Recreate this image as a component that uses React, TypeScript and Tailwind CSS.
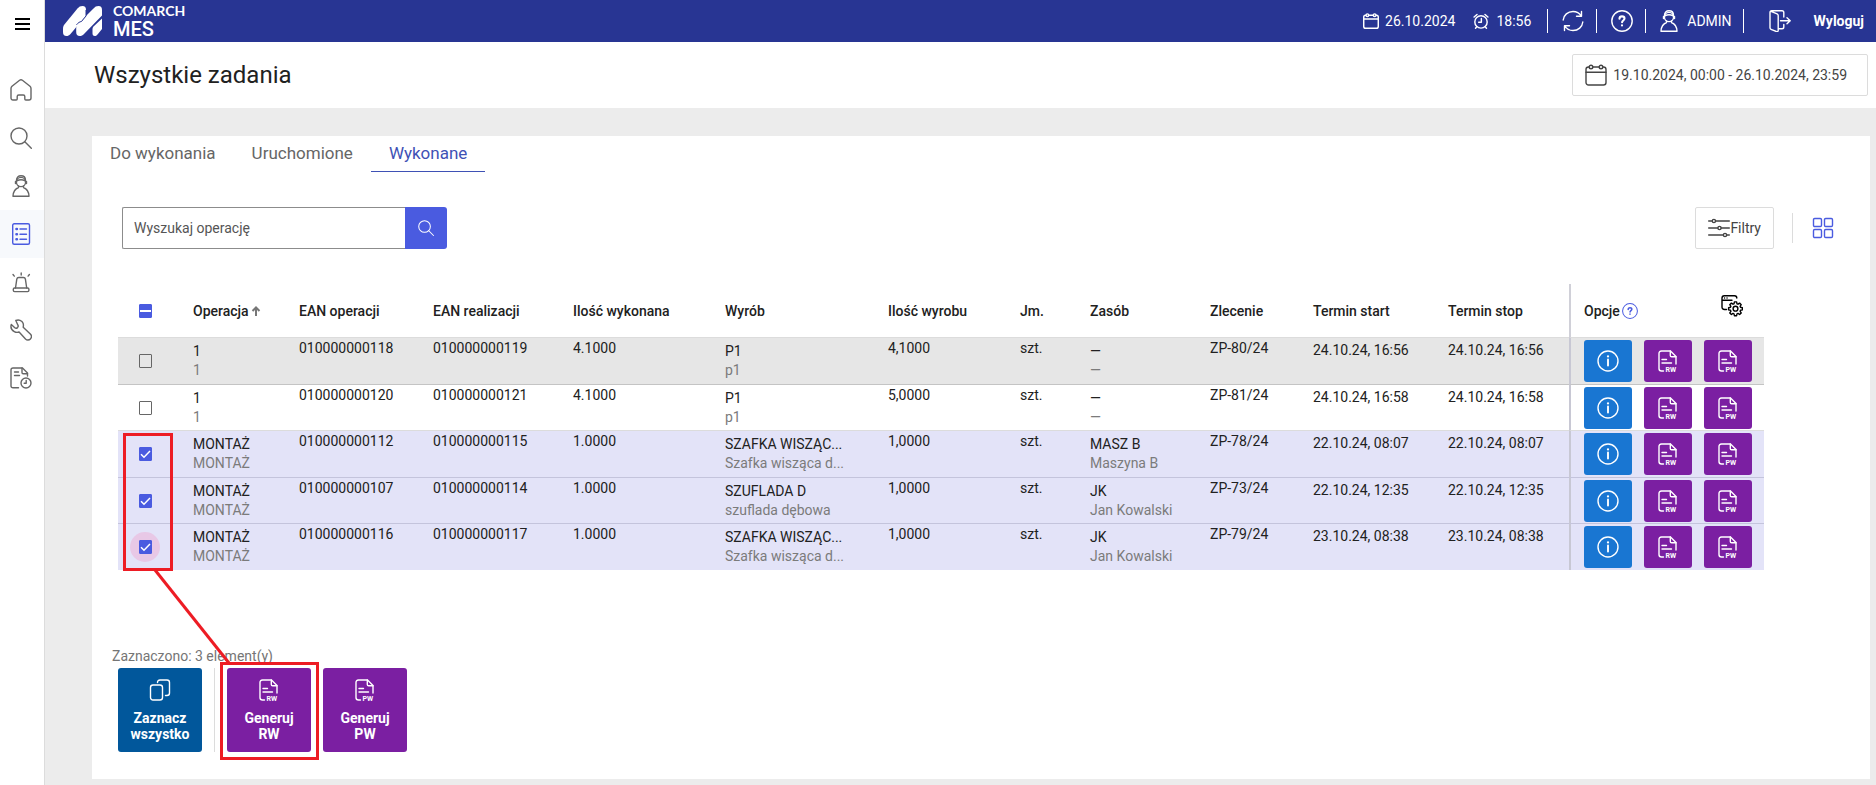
import type { ReactNode } from "react";

type IconProps = { className?: string };

function Svg({ className = "", children, box = "0 0 22 22" }: IconProps & { children: ReactNode; box?: string }) {
  return (
    <svg
      viewBox={box}
      fill="none"
      stroke="currentColor"
      strokeWidth="1.4"
      strokeLinecap="round"
      strokeLinejoin="round"
      aria-hidden="true"
      className={`shrink-0 ${className}`}
    >
      {children}
    </svg>
  );
}

const HomeIcon = ({ className }: IconProps) => (
  <Svg className={className}>
    <path d="M1 9.500c0-1 .3-1.500 1-2.200L9.600 1.300c.9-.7 1.900-.7 2.800 0L20 7.300c.7.7 1 1.200 1 2.200V19c0 1.200-.8 2-2 2h-3.200c-.7 0-1-.4-1-1v-2.500c0-1-.6-1.500-1.500-1.500h-4.600c-.9 0-1.500.5-1.500 1.500V20c0 .6-.3 1-1 1H3c-1.200 0-2-.8-2-2z" />
  </Svg>
);

const SearchIcon = ({ className }: IconProps) => (
  <Svg className={className}>
    <circle cx="9" cy="9" r="8" />
    <path d="M14.800 14.800 21.300 21.300" />
  </Svg>
);

const UserIcon = ({ className }: IconProps) => (
  <Svg className={className}>
    <circle cx="11" cy="7" r="4.600" />
    <path d="M6.500 5.500C6.500 2.500 8.300.8 11 .8s4.500 1.700 4.500 4.700M5.500 6.500v2M16.500 6.500v2M6.800 5.800c2.500-1.300 5.900-1.300 8.400 0M8.500 11v1.500C5.300 13.700 3.200 16.500 3 21.300h16c-.2-4.800-2.300-7.600-5.500-8.800V11" />
  </Svg>
);

const ListIcon = ({ className }: IconProps) => (
  <Svg className={className}>
    <rect x="2.700" y=".8" width="16.800" height="20.400" rx="1.500" />
    <path d="M10 6h6.500M10 11.200h6.500M10 16.300h6.500" />
    <path d="M6.500 6h.4M6.500 11.200h.4M6.500 16.300h.4" strokeWidth="2.600" />
  </Svg>
);

const AlarmIcon = ({ className }: IconProps) => (
  <Svg className={className}>
    <path d="M5.500 17 6.800 8.200C7 7 7.600 6.500 8.800 6.500h4.600c1.200 0 1.800.5 2 1.700L16.700 17" />
    <rect x="3.300" y="17" width="15.600" height="3.600" rx="1.300" />
    <path d="M11.200 2v2M3 3.500l1.300 1.600M19.400 3.500l-1.300 1.600" />
  </Svg>
);

const WrenchIcon = ({ className }: IconProps) => (
  <Svg className={className}>
    <path d="M5.800 1.500c2.800-1.200 6.200-.2 7.300 2.800.5 1.500.4 2.700.1 3.900l7.100 6.900c1.500 1.500 1.200 3.700.1 4.900-1.300 1.400-3.500 1.400-4.900 0l-6.400-7c-1.500.5-3.200.5-4.800-.4C1.500 11 .5 8 1.300 5.500l3.500 3.200c.8.7 1.900.6 2.700-.1.900-.9.900-2 .2-2.900z" />
  </Svg>
);

const ReportIcon = ({ className }: IconProps) => (
  <Svg className={className}>
    <path d="M8.500 20.800H3c-1.300 0-2-.7-2-2V3c0-1.300.7-2 2-2h9.500l5 5v3" />
    <path d="M12 1v4.500c0 .8.400 1.200 1.200 1.200h4.300M4.500 5h4M4.500 8.500h5" />
    <circle cx="16" cy="16" r="5" />
    <path d="M16.200 13.500v2.700h-2" />
  </Svg>
);

const CalendarIcon = ({ className }: IconProps) => (
  <Svg className={className}>
    <rect x="1" y="3" width="20" height="18" rx="2.500" />
    <path d="M1 8.300h20" />
    <circle cx="6" cy="3" r="1.800" fill="var(--hole)" />
    <circle cx="16" cy="3" r="1.800" fill="var(--hole)" />
  </Svg>
);

const ClockIcon = ({ className }: IconProps) => (
  <Svg className={className}>
    <circle cx="11" cy="12.300" r="8.500" />
    <path d="M11.500 7.500v5.300H7.800M1.500 5.500 5.500 2M20.500 5.500l-4-3.500M5 19l-1.500 2M17 19l1.500 2" />
  </Svg>
);

const RefreshIcon = ({ className }: IconProps) => (
  <Svg className={className}>
    <path d="M1.200 10C1.700 5 5.800 1.500 11 1.500c3.500 0 6.500 1.700 8.200 4.500M19.500 1.500V6.300h-5M20.800 12c-.5 5-4.600 8.500-9.800 8.500-3.500 0-6.500-1.700-8.200-4.500M2.500 20.500v-4.800h5" />
  </Svg>
);

const HelpIcon = ({ className }: IconProps) => (
  <Svg className={className}>
    <circle cx="11" cy="11" r="10.200" />
    <path d="M8.500 8.800c0-1.500 1-2.400 2.500-2.400s2.500.9 2.500 2.200c0 1.800-2.400 1.900-2.400 3.700M11 15.300v.2" strokeWidth="2.100" />
  </Svg>
);

const LogoutIcon = ({ className }: IconProps) => (
  <Svg className={className}>
    <path d="M1 2.500v15.300c0 .8.300 1.200 1 1.500l5.300 2.200c1.200.4 1.900 0 1.900-1.200V5.500c0-.8-.4-1.300-1.100-1.600L2 1.300M1 2.500c0-1 .6-1.700 1.600-1.700H13c1.200 0 1.800.7 1.800 1.800V7M9.200 18.800H13c1.200 0 1.800-.6 1.800-1.800v-2.500M11.500 10.800h9.500M18 7.800l3.200 3-3.200 3" />
  </Svg>
);

const FilterIcon = ({ className }: IconProps) => (
  <Svg className={className}>
    <path d="M.7 4h3.500M7.600 4h13.700M.7 11h9M13.300 11h8M.7 18h14.500M18.800 18h2.500" />
    <circle cx="5.900" cy="4" r="1.600" />
    <circle cx="11.500" cy="11" r="1.600" />
    <circle cx="17" cy="18" r="1.600" />
  </Svg>
);

const TilesIcon = ({ className }: IconProps) => (
  <Svg className={className}>
    <rect x="1.500" y="1.500" width="8" height="8" rx="1.200" />
    <rect x="12.500" y="1.500" width="8" height="8" rx="1.200" />
    <rect x="1.500" y="12.500" width="8" height="8" rx="1.200" />
    <rect x="12.500" y="12.500" width="8" height="8" rx="1.200" />
  </Svg>
);

const InfoIcon = ({ className }: IconProps) => (
  <Svg className={className}>
    <circle cx="11" cy="11" r="10" />
    <path d="M11 9.500v6" strokeWidth="1.900" />
    <path d="M11 6.300v.1" strokeWidth="2.200" />
  </Svg>
);

const CopyIcon = ({ className }: IconProps) => (
  <Svg className={className}>
    <rect x="1.500" y="6" width="12" height="15" rx="2.500" />
    <path d="M8.500 3.500c0-1.500.8-2.500 2.500-2.500h7c1.700 0 2.500 1 2.500 2.500V14c0 1.500-.8 2.500-2.500 2.500h-1.500" />
  </Svg>
);

const GearIcon = ({ className }: IconProps) => (
  <Svg className={className}>
    <path d="M5.500 14.500H3.500C1.800 14.500 1 13.500 1 12V3.200C1 1.700 1.900.8 3.300.8h10.200c1.400 0 2.300.9 2.300 2.200M1 5.200h10M3.500 3h.1M6 3h.1" />
    <circle cx="14.500" cy="13.700" r="2.400" />
    <path d="m13.400 6.900h2.200l.4 1.900 1 .4 1.600-1.100 1.600 1.600-1.100 1.600.4 1 1.900.4v2.200l-1.900.4-.4 1 1.100 1.600-1.600 1.600-1.600-1.100-1 .4-.4 1.900h-2.200l-.4-1.900-1-.4-1.600 1.100-1.600-1.600 1.100-1.600-.4-1-1.900-.4v-2.200l1.900-.4.4-1-1.100-1.600 1.600-1.600 1.600 1.100 1-.4z" />
  </Svg>
);

function DocIcon({ label, className }: IconProps & { label: string }) {
  return (
    <Svg className={className}>
      <path d="M6.500 21H4.500C2.800 21 2 20 2 18.500v-15C2 2 2.800 1 4.500 1h9L19 6.500V14" />
      <path d="M13.300 1v4.500c0 .9.400 1.300 1.300 1.300H19M5 9.500h4.500M5 13h9.500" />
      <text x="8.500" y="21.500" fontSize="7" fontWeight="700" fontFamily="Roboto, sans-serif" fill="currentColor" stroke="none">
        {label}
      </text>
    </Svg>
  );
}

function Logo() {
  return (
    <div className="flex items-center gap-[11px] text-white">
      <svg viewBox="0 0 39 30" className="h-[30px] w-[39px]" fill="currentColor" aria-hidden="true">
        <path d="M14.500 2.500C16 .8 17.300 0 19.500 0 22 0 23 1.500 23 4v5.500L7.500 28C6 29.600 5 30 3.500 30 1 30 0 28.500 0 26v-3.500c0-2 .5-3 1.800-4.600z" />
        <path d="M30.500 2.500C32 .8 33.300 0 35.500 0 38 0 39 1.500 39 4v5.500L21 28c-1.500 1.600-2.500 2-4.200 2-2.500 0-3.600-1.500-3.600-4v-3.500c0-1.500.3-3 1.500-4.300z" />
        <path d="M39 12.500V23l-4.500 5.500c-1 1.200-1.700 1.500-2.700 1.500-1.800 0-2.300-1.300-2.300-3v-4c0-1 .3-1.800 1-2.600z" />
        <path d="M23 4v6l-4.500 5.500c-2 .3-3.300 1.200-5 3.300" stroke="#283593" strokeWidth="1" fill="none" />
      </svg>
      <div>
        <div className="font-[Lato,sans-serif] text-sm leading-4 font-bold">COMARCH</div>
        <div className="text-xl leading-5 font-medium">MES</div>
      </div>
    </div>
  );
}

const navItems = [
  { label: "Start", icon: HomeIcon },
  { label: "Szukaj", icon: SearchIcon },
  { label: "Pracownicy", icon: UserIcon },
  { label: "Zadania", icon: ListIcon, active: true },
  { label: "Alarmy", icon: AlarmIcon },
  { label: "Narzędzia", icon: WrenchIcon },
  { label: "Raporty", icon: ReportIcon },
];

function Sidebar() {
  return (
    <aside className="flex w-[45px] shrink-0 flex-col border-r border-[#dcdcdc] bg-white text-[#666]">
      <button aria-label="Menu" className="mt-[18px] ml-[15px] flex h-3 w-[15px] flex-col justify-between">
        <span className="h-0.5 w-full bg-black" />
        <span className="h-0.5 w-full bg-black" />
        <span className="h-0.5 w-full bg-black" />
      </button>
      <nav className="mt-9">
        {navItems.map(({ label, icon: Icon, active }) => (
          <a
            key={label}
            href="#"
            aria-label={label}
            className={`flex h-12 items-center justify-center pr-0.5 ${active ? "bg-[#f7f9fc] text-[#4a5be0]" : ""}`}
          >
            <Icon className="size-[22px]" />
          </a>
        ))}
      </nav>
    </aside>
  );
}

function TopBar() {
  return (
    <header className="flex h-[42px] items-center justify-between bg-[#283593] pr-3 pl-[18px] text-sm text-white [--hole:#283593]">
      <Logo />
      <div className="flex items-center">
        <CalendarIcon className="size-4 stroke-2" />
        <span className="ml-1.5">26.10.2024</span>
        <ClockIcon className="ml-[18px] size-4 stroke-2" />
        <span className="ml-[7px]">18:56</span>
        <span className="ml-4 h-6 w-px bg-white" />
        <button aria-label="Odśwież" className="ml-3.5">
          <RefreshIcon className="size-[22px]" />
        </button>
        <span className="ml-3 h-6 w-px bg-white" />
        <button aria-label="Pomoc" className="ml-3.5">
          <HelpIcon className="size-[22px]" />
        </button>
        <span className="ml-3 h-6 w-px bg-white" />
        <UserIcon className="ml-3 size-[22px]" />
        <span className="ml-[7px]">ADMIN</span>
        <span className="ml-[11px] h-6 w-px bg-white" />
        <button className="ml-[25px] flex items-center font-bold">
          <LogoutIcon className="mr-[23px] size-[22px]" />
          Wyloguj
        </button>
      </div>
    </header>
  );
}

type Row = {
  op: string;
  ean: string;
  eanReal: string;
  done: string;
  product: [string, string];
  qty: string;
  resource: [string, string];
  order: string;
  date: string;
  checked?: boolean;
  focused?: boolean;
  tone: string;
};

const rows: Row[] = [
  { op: "1", ean: "010000000118", eanReal: "010000000119", done: "4.1000", product: ["P1", "p1"], qty: "4,1000", resource: ["—", "—"], order: "ZP-80/24", date: "24.10.24, 16:56", tone: "bg-[#e6e6e6] *:border-t-[#dcdcdc]" },
  { op: "1", ean: "010000000120", eanReal: "010000000121", done: "4.1000", product: ["P1", "p1"], qty: "5,0000", resource: ["—", "—"], order: "ZP-81/24", date: "24.10.24, 16:58", tone: "bg-white *:border-t-[#c4c4c4]" },
  { op: "MONTAŻ", ean: "010000000112", eanReal: "010000000115", done: "1.0000", product: ["SZAFKA WISZĄC...", "Szafka wisząca d..."], qty: "1,0000", resource: ["MASZ B", "Maszyna B"], order: "ZP-78/24", date: "22.10.24, 08:07", checked: true, tone: "bg-[#e3e3f8] *:border-t-[#dcdcdc]" },
  { op: "MONTAŻ", ean: "010000000107", eanReal: "010000000114", done: "1.0000", product: ["SZUFLADA D", "szuflada dębowa"], qty: "1,0000", resource: ["JK", "Jan Kowalski"], order: "ZP-73/24", date: "22.10.24, 12:35", checked: true, tone: "bg-[#e3e3f8] *:border-t-[#c4c4dc]" },
  { op: "MONTAŻ", ean: "010000000116", eanReal: "010000000117", done: "1.0000", product: ["SZAFKA WISZĄC...", "Szafka wisząca d..."], qty: "1,0000", resource: ["JK", "Jan Kowalski"], order: "ZP-79/24", date: "23.10.24, 08:38", checked: true, focused: true, tone: "bg-[#e3e3f8] *:border-t-[#c4c4dc]" },
];

function Checkbox({ label, checked, mixed, focused }: { label: string; checked?: boolean; mixed?: boolean; focused?: boolean }) {
  return (
    <span className="relative flex h-3.5 w-[13px]">
      {focused && <span className="absolute -top-2 -left-[9px] size-[30px] rounded-full bg-[#e8c8e6]" />}
      <input
        type="checkbox"
        aria-label={label}
        defaultChecked={checked || mixed}
        className="relative h-3.5 w-[13px] appearance-none rounded-[1px] border border-[#666] checked:border-[#4a5be0] checked:bg-[#4a5be0]"
      />
      {(checked || mixed) && (
        <svg viewBox="0 0 13 14" className="pointer-events-none absolute inset-0 h-3.5 w-[13px]" fill="none" stroke="white" aria-hidden="true">
          {mixed ? <path d="M1 7h11" strokeWidth="2" /> : <path d="m2 7.300 3 3L11 4" strokeWidth="1.500" />}
        </svg>
      )}
    </span>
  );
}

function TwoLines({ lines }: { lines: [string, string] }) {
  return (
    <td className="pt-1 leading-[19px] whitespace-nowrap">
      <div>{lines[0]}</div>
      <div className="text-[#7b7b7b]">{lines[1]}</div>
    </td>
  );
}

function TaskTable() {
  return (
    <table className="w-full table-fixed border-separate border-spacing-0 text-left text-sm leading-4 text-[#212121]">
      <colgroup>
        <col className="w-[75px]" />
        <col className="w-[106px]" />
        <col className="w-[134px]" />
        <col className="w-[140px]" />
        <col className="w-[152px]" />
        <col className="w-[163px]" />
        <col className="w-[132px]" />
        <col className="w-[70px]" />
        <col className="w-[120px]" />
        <col className="w-[103px]" />
        <col className="w-[135px]" />
        <col className="w-[121px]" />
        <col className="w-[195px]" />
      </colgroup>
      <thead>
        <tr className="h-[53px] *:font-medium">
          <th className="pl-[21px]">
            <Checkbox label="Zaznacz wszystkie" mixed />
          </th>
          <th>
            <span className="flex items-center gap-0.5">
              Operacja
              <svg viewBox="0 0 10 12" className="h-3 w-2.5" fill="none" stroke="#777" strokeWidth="2" aria-hidden="true">
                <path d="M5 11V2.500M1.500 6 5 2.500 8.500 6" />
              </svg>
            </span>
          </th>
          <th>EAN operacji</th>
          <th>EAN realizacji</th>
          <th>Ilość wykonana</th>
          <th>Wyrób</th>
          <th>Ilość wyrobu</th>
          <th>Jm.</th>
          <th>Zasób</th>
          <th>Zlecenie</th>
          <th>Termin start</th>
          <th>Termin stop</th>
          <th className="border-l-2 border-[#d0d0d8] pr-[21px] pl-[13px]">
            <div className="flex items-center">
              Opcje
              <HelpIcon className="ml-0.5 size-4 text-[#4a5be0]" />
              <button aria-label="Ustawienia kolumn" className="mb-2.5 ml-auto text-black">
                <GearIcon className="size-[22px]" />
              </button>
            </div>
          </th>
        </tr>
      </thead>
      <tbody>
        {rows.map((r) => (
          <tr key={r.ean} className={`align-top *:border-t odd:h-[47px] even:h-[46px] ${r.tone}`}>
            <td className="pl-[21px] align-middle">
              <Checkbox label={r.ean} checked={r.checked} focused={r.focused} />
            </td>
            <TwoLines lines={[r.op, r.op]} />
            <td className="pt-0.5">{r.ean}</td>
            <td className="pt-0.5">{r.eanReal}</td>
            <td className="pt-0.5">{r.done}</td>
            <TwoLines lines={r.product} />
            <td className="pt-0.5">{r.qty}</td>
            <td className="pt-0.5">szt.</td>
            <TwoLines lines={r.resource} />
            <td className="pt-0.5">{r.order}</td>
            <td className="pt-1">{r.date}</td>
            <td className="pt-1">{r.date}</td>
            <td className="border-l-2 border-l-[#c8c8d4] pt-0.5 pl-[13px]">
              <div className="flex gap-3 text-white *:flex *:h-[42px] *:w-12 *:items-center *:justify-center *:rounded-[3px]">
                <button aria-label="Informacje" className="bg-[#1976d2]">
                  <InfoIcon className="size-[22px]" />
                </button>
                <button className="bg-[#7b1fa2]">
                  <DocIcon label="RW" className="size-[22px]" />
                </button>
                <button className="bg-[#7b1fa2]">
                  <DocIcon label="PW" className="size-[22px]" />
                </button>
              </div>
            </td>
          </tr>
        ))}
      </tbody>
    </table>
  );
}

function ActionButton({ icon, lines, className }: { icon: ReactNode; lines: [string, string]; className: string }) {
  return (
    <button className={`flex size-[84px] flex-col items-center rounded-[3px] pt-[11px] text-sm leading-4 font-bold text-white ${className}`}>
      {icon}
      <span className="mt-[9px]">{lines[0]}</span>
      <span>{lines[1]}</span>
    </button>
  );
}

export default function App() {
  return (
    <div className="flex min-h-screen bg-[#ececec] font-[Roboto,sans-serif]">
      <Sidebar />
      <div className="min-w-0 flex-1">
        <TopBar />
        <div className="flex h-[66px] items-center justify-between bg-white pr-2 pl-[49px]">
          <h1 className="text-2xl text-[#212121]">Wszystkie zadania</h1>
          <button className="flex h-[42px] items-center rounded-[2px] border border-[#dcdcdc] pr-5 pl-3 text-sm text-[#444] [--hole:white]">
            <CalendarIcon className="mr-1.5 size-[22px]" />
            19.10.2024, 00:00 - 26.10.2024, 23:59
          </button>
        </div>

        <main className="relative mt-7 mr-1.5 mb-1.5 ml-[47px] bg-white pb-[27px]">
          <div role="tablist" className="flex text-[17px] text-[#666] *:h-9 *:px-[18px]">
            <button role="tab">Do wykonania</button>
            <button role="tab">Uruchomione</button>
            <button role="tab" aria-selected="true" className="border-b border-[#3f51b5] text-[#3f51b5]">
              Wykonane
            </button>
          </div>

          <div className="mt-[35px] flex items-center pr-9 pl-[30px]">
            <form className="flex h-[42px] w-[325px]">
              <input
                type="text"
                aria-label="Wyszukaj operację"
                placeholder="Wyszukaj operację"
                className="min-w-0 flex-1 rounded-l-[2px] border border-r-0 border-[#8c8c8c] px-[11px] text-sm placeholder:text-[#555]"
              />
              <button type="button" aria-label="Szukaj" className="flex w-[42px] items-center justify-center rounded-r-[3px] bg-[#4a5be0] text-white">
                <SearchIcon className="size-4" />
              </button>
            </form>
            <button className="ml-auto flex h-[42px] items-center rounded-[2px] border border-[#dcdcdc] px-3 text-sm text-[#444]">
              <FilterIcon className="size-[22px]" />
              Filtry
            </button>
            <span className="mr-[19px] ml-[18px] h-[30px] w-px bg-[#dcdcdc]" />
            <button aria-label="Widok kafelków" className="text-[#4a5be0]">
              <TilesIcon className="size-[22px]" />
            </button>
          </div>

          <div className="mt-[35px] mr-[106px] ml-[26px]">
            <TaskTable />
          </div>

          <div className="mt-[78px] ml-5 h-4 overflow-hidden text-sm leading-4 text-[#757575]">Zaznaczono: 3 element(y)</div>
          <div className="mt-1 ml-[26px] flex">
            <ActionButton icon={<CopyIcon className="size-[22px]" />} lines={["Zaznacz", "wszystko"]} className="bg-[#01579b]" />
            <span className="mx-3 w-px bg-[#dcdcdc]" />
            <ActionButton icon={<DocIcon label="RW" className="size-[22px]" />} lines={["Generuj", "RW"]} className="mr-3 bg-[#7b1fa2]" />
            <ActionButton icon={<DocIcon label="PW" className="size-[22px]" />} lines={["Generuj", "PW"]} className="bg-[#7b1fa2]" />
          </div>

          {/* red callout from the ticked rows to the RW button */}
          <svg viewBox="0 0 240 640" className="pointer-events-none absolute top-0 left-0 h-[640px] w-60" fill="none" stroke="#ed1c24" strokeWidth="3" aria-hidden="true">
            <rect x="32.500" y="298.500" width="47" height="135" />
            <path d="M63 434 137 527" />
            <rect x="129.500" y="527.500" width="96" height="95" />
          </svg>
        </main>
      </div>
    </div>
  );
}
